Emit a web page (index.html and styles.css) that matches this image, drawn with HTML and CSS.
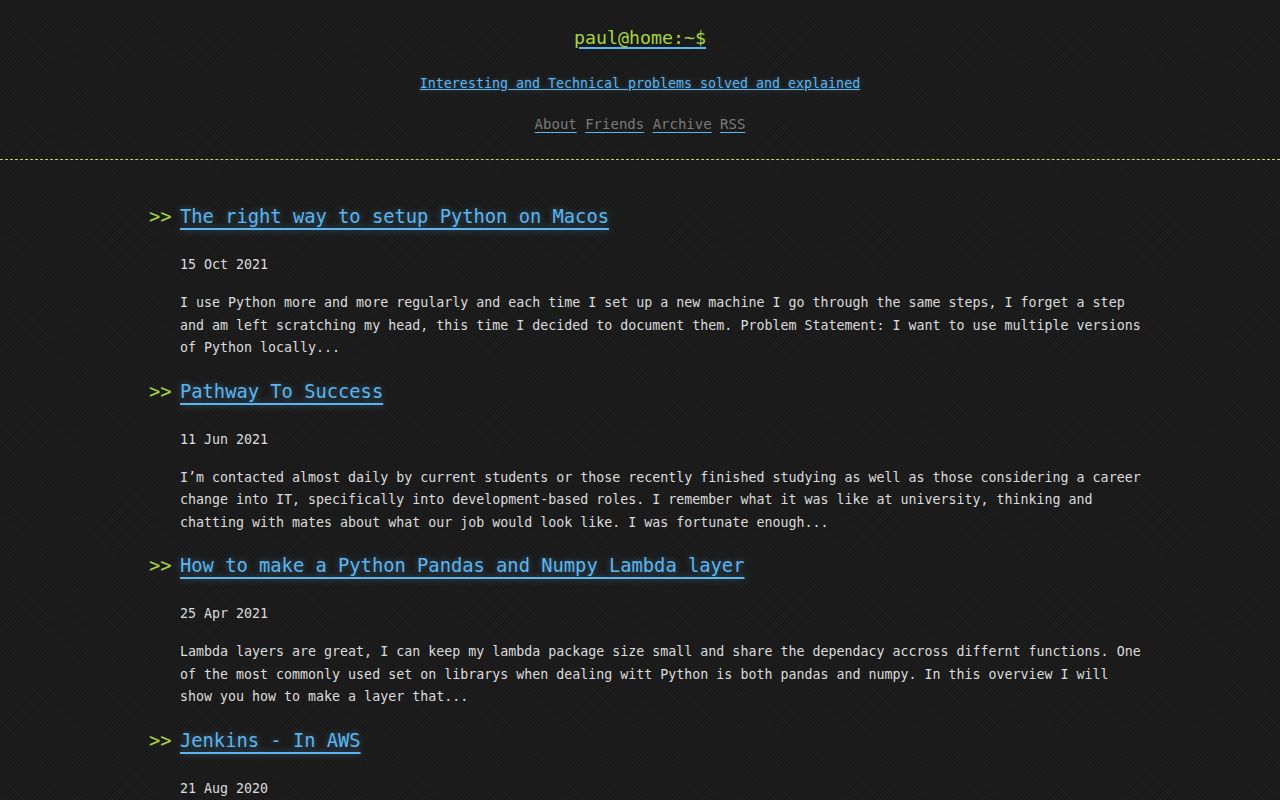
FILE: index.html
```html
<!DOCTYPE html>
<html lang="en">
<head>
  <meta charset="UTF-8" />
  <meta name="viewport" content="width=device-width, initial-scale=1.0"/>
  <title>paul@home:~$</title>
  <link rel="stylesheet" href="styles.css">
</head>
<body>
  <header class="site-header">
    <h1 class="site-title"><a href="#">paul@home:~$</a></h1>
    <p class="site-desc"><a href="#">Interesting and Technical problems solved and explained</a></p>
    <nav class="site-nav">
      <a href="#">About</a> <a href="#">Friends</a> <a href="#">Archive</a> <a href="#">RSS</a>
    </nav>
  </header>

  <main class="posts">
    <article class="post">
      <h2 class="post-title"><span class="prompt">&gt;&gt;</span><a href="#">The right way to setup Python on Macos</a></h2>
      <div class="post-date">15 Oct 2021</div>
      <p class="post-excerpt">I use Python more and more regularly and each time I set up a new machine I go through the same steps, I forget a step and am left scratching my head, this time I decided to document them. Problem Statement: I want to use multiple versions of Python locally...</p>
    </article>

    <article class="post">
      <h2 class="post-title"><span class="prompt">&gt;&gt;</span><a href="#">Pathway To Success</a></h2>
      <div class="post-date">11 Jun 2021</div>
      <p class="post-excerpt">I’m contacted almost daily by current students or those recently finished studying as well as those considering a career change into IT, specifically into development-based roles. I remember what it was like at university, thinking and chatting with mates about what our job would look like. I was fortunate enough...</p>
    </article>

    <article class="post">
      <h2 class="post-title"><span class="prompt">&gt;&gt;</span><a href="#">How to make a Python Pandas and Numpy Lambda layer</a></h2>
      <div class="post-date">25 Apr 2021</div>
      <p class="post-excerpt">Lambda layers are great, I can keep my lambda package size small and share the dependacy accross differnt functions. One of the most commonly used set on librarys when dealing witt Python is both pandas and numpy. In this overview I will show you how to make a layer that...</p>
    </article>

    <article class="post">
      <h2 class="post-title"><span class="prompt">&gt;&gt;</span><a href="#">Jenkins - In AWS</a></h2>
      <div class="post-date">21 Aug 2020</div>
      <p class="post-excerpt">A quick look at running Jenkins inside AWS, what it takes to get a build server up and running and how to keep it cheap...</p>
    </article>
  </main>
</body>
</html>
```

FILE: styles.css
```css
body {
  margin: 0;
  font-family: "DejaVu Sans Mono", "Liberation Mono", monospace;
  font-size: 13.3px;
  color: #dcdcdc;
  background-color: #1b1b1b;
  background-image:
    repeating-linear-gradient(45deg, rgba(255,255,255,0.012) 0 1px, transparent 1px 3px),
    repeating-linear-gradient(-45deg, rgba(0,0,0,0.08) 0 1px, transparent 1px 3px);
}

a {
  color: #5cb5ee;
  text-decoration: underline;
  text-decoration-color: #5cb5ee;
}

.site-header {
  text-align: center;
  padding-top: 20px;
  padding-bottom: 24px;
  border-bottom: 1px dashed #b9d85a;
}

.site-title {
  margin: 0;
  font-size: 18.3px;
  font-weight: normal;
  line-height: 36px;
}

.site-title a {
  color: #a8d53c;
  text-decoration-thickness: 2px;
  text-underline-offset: 3px;
}

.site-desc {
  margin: 18px 0 0;
  line-height: 20px;
}

.site-desc a {
  text-shadow: 0 0 4px rgba(92, 181, 238, 0.35);
}

.site-nav {
  margin-top: 19px;
  line-height: 22px;
  font-size: 14px;
}

.site-nav a {
  color: #7a7a7a;
  text-underline-offset: 3px;
}

.posts {
  width: 965px;
  margin-left: calc(50% - 500px);
  padding: 42px 0 0 40px;
}

.post-title {
  display: flex;
  margin: 0;
  font-size: 18.75px;
  font-weight: normal;
  line-height: 30px;
}

.prompt {
  width: 31px;
  margin-left: -31px;
  color: #a8d53c;
}

.post-title a {
  text-decoration-thickness: 2px;
  text-underline-offset: 5px;
  text-shadow: 0 0 6px rgba(92, 181, 238, 0.45);
}

.post-date {
  margin-top: 23px;
  line-height: 20px;
}

.post-excerpt {
  margin: 17px 0 17px;
  line-height: 22.5px;
}
```
